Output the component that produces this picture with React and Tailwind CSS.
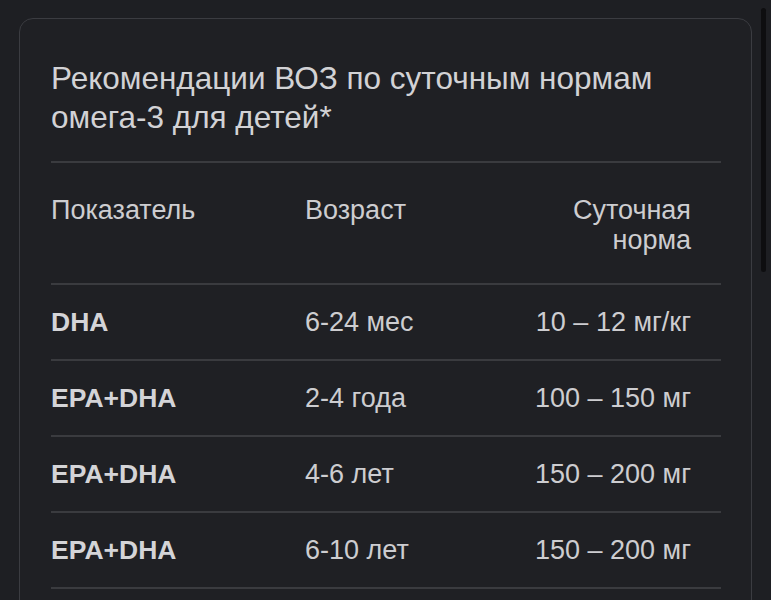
export default function App() {
  const rows = [
    ["DHA", "6-24 мес", "10 – 12 мг/кг"],
    ["EPA+DHA", "2-4 года", "100 – 150 мг"],
    ["EPA+DHA", "4-6 лет", "150 – 200 мг"],
    ["EPA+DHA", "6-10 лет", "150 – 200 мг"],
  ];
  return (
    <div
      className="relative min-h-[600px] w-full overflow-hidden bg-[#1e1f23] pt-[18px] pl-[19px] pr-[19px]"
      style={{ fontFamily: '"Liberation Sans", Arial, sans-serif' }}
    >
      <div className="w-[733px] rounded-[14px] border border-[#3b3c41] bg-[#1f2024] pl-[31px] pr-[30px] pt-[40px] pb-[40px]">
        <h1 className="text-[31.5px] leading-[39px] font-normal text-[#d2d2d5]">
          Рекомендации ВОЗ по суточным нормам
          <br />
          омега-3 для детей*
        </h1>
        <div className="mt-[24px] h-[2px] bg-[#3a3b3f]" />
        <div className="grid grid-cols-[254px_1fr_auto] border-b-2 border-[#3a3b3f] pt-[32px] pb-[28px] pr-[30px] text-[27px] leading-[30px] text-[#cdcdd0]">
          <div>Показатель</div>
          <div>Возраст</div>
          <div className="text-right">
            Суточная
            <br />
            норма
          </div>
        </div>
        {rows.map((r, i) => (
          <div
            key={i}
            className="grid grid-cols-[254px_1fr_auto] border-b-2 border-[#3a3b3f] py-[22px] pr-[30px] text-[27px] leading-[30px] text-[#cdcdd0]"
          >
            <div className="font-bold text-[26.5px] text-[#d4d4d7]">{r[0]}</div>
            <div>{r[1]}</div>
            <div className="text-right">{r[2]}</div>
          </div>
        ))}
        <div className="h-[60px]" />
      </div>
      <div className="absolute left-[761px] top-[8px] h-[264px] w-[5px] rounded-full bg-[#0e0e10]" />
    </div>
  );
}
